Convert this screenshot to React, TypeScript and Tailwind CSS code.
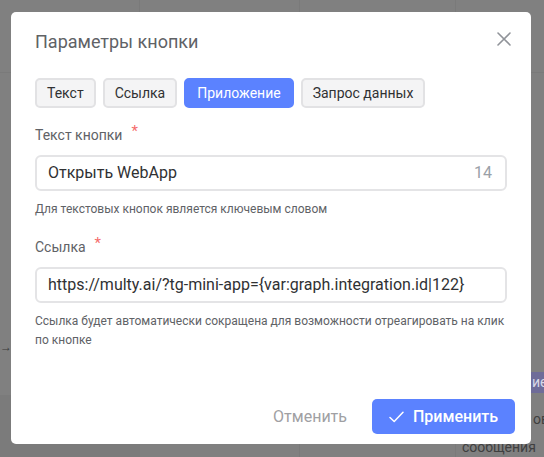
import React from "react";

const font = { fontFamily: "Roboto, 'Noto Sans', sans-serif" };

function Tab({ label, active }: { label: string; active?: boolean }) {
  return (
    <div
      className={
        active
          ? "h-[30px] px-[11px] flex items-center rounded-[5px] border-2 border-[#5b82ff] bg-[#5b82ff] text-white text-[14px]"
          : "h-[30px] px-[10px] flex items-center rounded-[5px] border-2 border-[#e2e2e4] bg-[#f4f4f5] text-[#303133] text-[14px]"
      }
    >
      {label}
    </div>
  );
}

function Label({ text }: { text: string }) {
  return (
    <div className="flex items-start text-[14px] leading-[20px] text-[#606266]">
      <span>{text}</span>
      <span className="ml-[9px] text-[#f56c6c] text-[15px] leading-[16px] -mt-[2px]">*</span>
    </div>
  );
}

export default function App() {
  return (
    <div className="relative w-[544px] h-[457px] overflow-hidden bg-[#808080]" style={font}>
      {/* background canvas under overlay */}
      <div className="absolute left-0 top-[72px] w-[544px] h-px bg-[#7a7a7a]" />
      <div className="absolute left-[139px] top-0 w-px h-[457px] bg-[#7a7a7a]" />
      <div className="absolute left-[299px] top-0 w-px h-[457px] bg-[#7a7a7a]" />
      <div className="absolute left-[455px] top-0 w-px h-[457px] bg-[#7a7a7a]" />
      <div className="absolute left-0 top-[395px] w-[140px] h-[62px] bg-[#7b7b7b]" />
      <div className="absolute left-0 top-[340px] text-[#3a3a3a] text-[12px] leading-[14px]">→</div>
      <div className="absolute left-[531px] top-[372px] w-[13px] h-[21px] overflow-hidden bg-[#6f6c99]">
        <div className="text-[#d8d8e8] text-[14px] leading-[21px] pl-[1px] whitespace-nowrap">ие</div>
      </div>
      <div className="absolute left-[531px] top-[410px] w-[13px] h-[18px] overflow-hidden">
        <div className="text-[#3f3f3f] text-[14px] leading-[18px] pl-[2px] whitespace-nowrap">ов.</div>
      </div>
      <div className="absolute left-[462px] top-[444px] w-[82px] h-[13px] overflow-hidden">
        <div className="-mt-[6px] text-[#3f3f3f] text-[14px] leading-[18px] whitespace-nowrap">сообщения</div>
      </div>

      {/* modal */}
      <div className="absolute left-[11px] top-[12px] w-[520px] h-[432px] bg-white rounded-[5px] flex flex-col">
        <div className="flex items-start justify-between pl-[24px] pr-[20px] pt-[18px]">
          <div className="text-[18px] leading-[24px] text-[#606266]">Параметры кнопки</div>
          <svg width="14" height="14" viewBox="0 0 14 14" className="mt-[2px]">
            <path d="M1 1 L13 13 M13 1 L1 13" stroke="#909399" strokeWidth="1.6" strokeLinecap="round" />
          </svg>
        </div>

        <div className="flex gap-[7px] px-[24px] mt-[24px]">
          <Tab label="Текст" />
          <Tab label="Ссылка" />
          <Tab label="Приложение" active />
          <Tab label="Запрос данных" />
        </div>

        <div className="px-[24px] mt-[17px] flex flex-col">
          <Label text="Текст кнопки" />
          <div className="mt-[10px] h-[36px] rounded-[6px] border-2 border-[#e4e4e6] flex items-center justify-between pl-[11px] pr-[13px] text-[16px]">
            <span className="text-[#303133]">Открыть WebApp</span>
            <span className="text-[#9aa0a8]">14</span>
          </div>
          <div className="mt-[9px] text-[12px] leading-[18px] text-[#606266]">
            Для текстовых кнопок является ключевым словом
          </div>

          <div className="mt-[19px]">
            <Label text="Ссылка" />
          </div>
          <div className="mt-[10px] h-[36px] rounded-[6px] border-2 border-[#e4e4e6] flex items-center pl-[11px] pr-[13px] text-[16px]">
            <span className="text-[#303133]">https://multy.ai/?tg-mini-app=&#123;var:graph.integration.id|122&#125;</span>
          </div>
          <div className="mt-[9px] text-[12px] leading-[18.5px] text-[#606266]">
            Ссылка будет автоматически сокращена для возможности отреагировать на клик по кнопке
          </div>
        </div>

        <div className="mt-auto flex items-center justify-end pr-[16px] pb-[10px] gap-[25px]">
          <span className="text-[16px] text-[#a0a0a3]">Отменить</span>
          <div className="h-[35px] w-[143px] rounded-[5px] bg-[#5b82ff] flex items-center pl-[17px] gap-[9px] text-white text-[16px] font-medium">
            <svg width="15" height="12" viewBox="0 0 15 12">
              <path d="M1 6.5 L5.2 10.5 L14 1.2" stroke="white" strokeWidth="1.5" fill="none" strokeLinecap="round" strokeLinejoin="round" />
            </svg>
            <span>Применить</span>
          </div>
        </div>
      </div>
    </div>
  );
}
